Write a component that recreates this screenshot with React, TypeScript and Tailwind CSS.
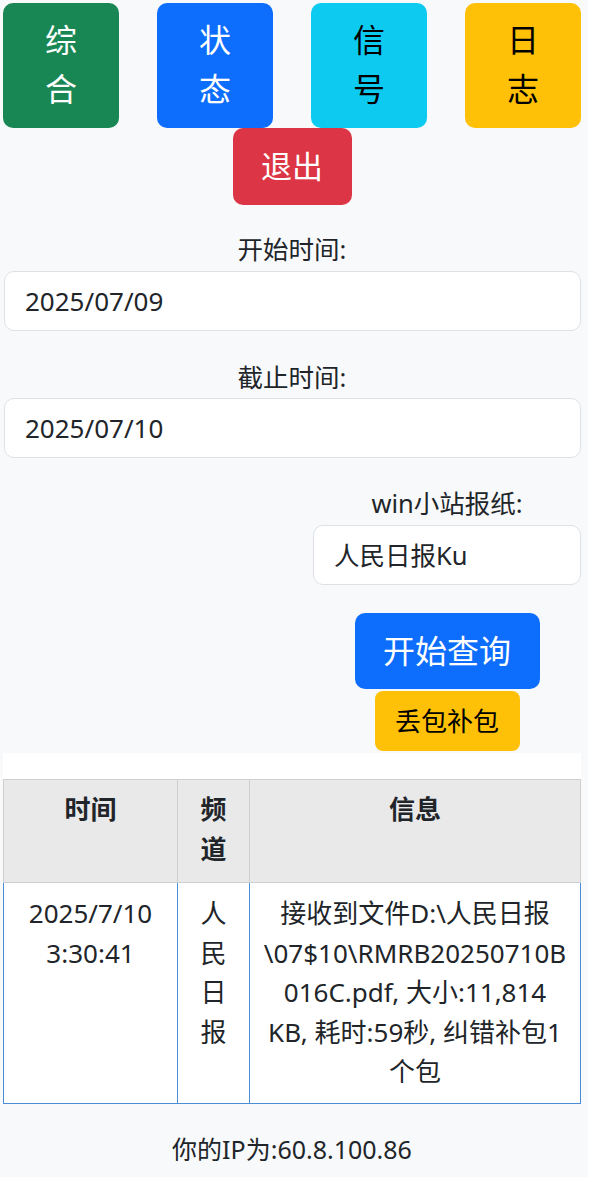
import React from 'react';

const font = { fontFamily: '"Noto Sans", "Noto Sans CJK SC", sans-serif' };

function NavButton({ label, className }: { label: string[]; className: string }) {
  return (
    <button className={`w-[116px] h-[125px] rounded-[10px] flex flex-col items-center justify-center pb-[3px] text-[32px] leading-[49px] ${className}`}>
      {label.map((c) => (
        <span key={c}>{c}</span>
      ))}
    </button>
  );
}

export default function App() {
  return (
    <div className="bg-white min-h-[1195px]" style={font}>
      <div className="w-[588px] h-[1177px] bg-[#f8f9fa] pl-[3px] pr-[7px] pt-[3px] text-[#212529]">
        <div className="flex justify-between">
          <NavButton label={['综', '合']} className="bg-[#198754] text-white" />
          <NavButton label={['状', '态']} className="bg-[#0d6efd] text-white" />
          <NavButton label={['信', '号']} className="bg-[#0dcaf0] text-black" />
          <NavButton label={['日', '志']} className="bg-[#ffc107] text-black" />
        </div>
        <div className="flex justify-center">
          <button className="w-[119px] h-[77px] rounded-[10px] bg-[#dc3545] text-white text-[31px]">退出</button>
        </div>

        <div className="mt-[28px] text-center text-[25.5px] leading-[32px]">开始时间:</div>
        <div className="mt-[6px] ml-[1px] h-[60px] rounded-[10px] border border-[#dee2e6] bg-white flex items-center pl-[20px] text-[26px]">
          2025/07/09
        </div>

        <div className="mt-[30px] text-center text-[25.5px] leading-[32px]">截止时间:</div>
        <div className="mt-[5px] ml-[1px] h-[60px] rounded-[10px] border border-[#dee2e6] bg-white flex items-center pl-[20px] text-[26px]">
          2025/07/10
        </div>

        <div className="flex justify-end">
          <div className="w-[268px] flex flex-col items-center">
            <div className="mt-[29px] text-[25.5px] leading-[32px]">win小站报纸:</div>
            <div className="mt-[6px] w-full h-[60px] rounded-[10px] border border-[#dee2e6] bg-white flex items-center pl-[20px] text-[25.5px]">
              人民日报Ku
            </div>
            <button className="mt-[28px] w-[185px] h-[76px] rounded-[10px] bg-[#0d6efd] text-white text-[32px]">开始查询</button>
            <button className="mt-[2px] w-[145px] h-[60px] rounded-[8px] bg-[#ffc107] text-black text-[26px]">丢包补包</button>
          </div>
        </div>

        <div className="mt-[2px] bg-white pt-[26px]">
          <table className="w-[578px] border-collapse text-[26px] text-center">
            <thead>
              <tr className="bg-[#e9e9e9]">
                <th className="w-[174px] border border-[#cfcfcf] align-top pt-[9px] pb-[13px] leading-[40px] font-bold">时间</th>
                <th className="w-[72px] border border-[#cfcfcf] align-top pt-[9px] pb-[13px] leading-[40px] font-bold">
                  频<br />道
                </th>
                <th className="border border-[#cfcfcf] align-top pt-[9px] pb-[13px] leading-[40px] font-bold">信息</th>
              </tr>
            </thead>
            <tbody>
              <tr className="bg-white">
                <td className="border border-[#4a8fd6] align-top py-[11px] leading-[39.5px]">
                  2025/7/10
                  <br />
                  3:30:41
                </td>
                <td className="border border-[#4a8fd6] align-top py-[11px] leading-[39.5px]">
                  人<br />民<br />日<br />报
                </td>
                <td className="border border-[#4a8fd6] align-top py-[11px] leading-[39.5px] whitespace-nowrap">
                  接收到文件D:\人民日报
                  <br />
                  \07$10\RMRB20250710B
                  <br />
                  016C.pdf, 大小:11,814
                  <br />
                  KB, 耗时:59秒, 纠错补包1
                  <br />
                  个包
                </td>
              </tr>
            </tbody>
          </table>
        </div>

        <div className="mt-[29px] text-center text-[25px] leading-[32px]">你的IP为:60.8.100.86</div>
      </div>
    </div>
  );
}
